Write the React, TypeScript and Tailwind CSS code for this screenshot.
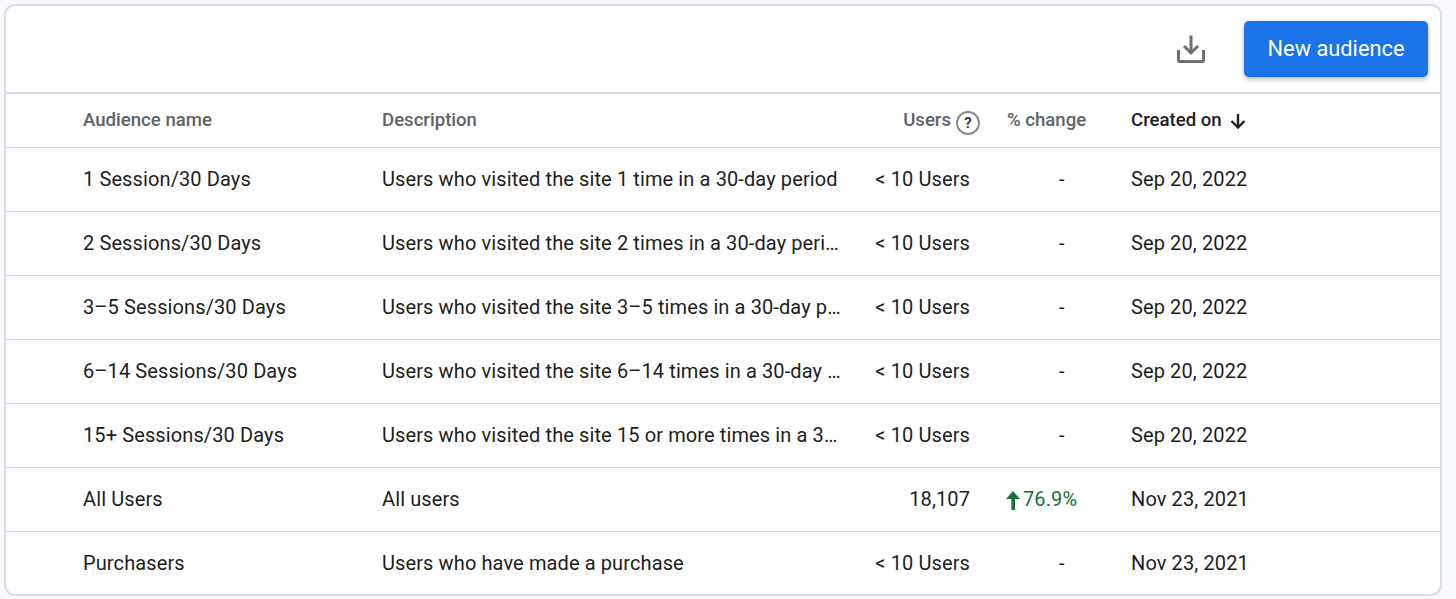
import React from 'react'

type Row = {
  name: string;
  description: string;
  users: string;
  change: string;
  created: string;
}

const rows: Row[] = [
  { name: '1 Session/30 Days', description: 'Users who visited the site 1 time in a 30-day period', users: '< 10 Users', change: '-', created: 'Sep 20, 2022' },
  { name: '2 Sessions/30 Days', description: 'Users who visited the site 2 times in a 30-day period', users: '< 10 Users', change: '-', created: 'Sep 20, 2022' },
  { name: '3–5 Sessions/30 Days', description: 'Users who visited the site 3–5 times in a 30-day period', users: '< 10 Users', change: '-', created: 'Sep 20, 2022' },
  { name: '6–14 Sessions/30 Days', description: 'Users who visited the site 6–14 times in a 30-day period', users: '< 10 Users', change: '-', created: 'Sep 20, 2022' },
  { name: '15+ Sessions/30 Days', description: 'Users who visited the site 15 or more times in a 30-day period', users: '< 10 Users', change: '-', created: 'Sep 20, 2022' },
  { name: 'All Users', description: 'All users', users: '18,107', change: '76.9%', created: 'Nov 23, 2021' },
  { name: 'Purchasers', description: 'Users who have made a purchase', users: '< 10 Users', change: '-', created: 'Nov 23, 2021' },
]

const cols = 'grid grid-cols-[299px_459px_129px_161px_1fr] pl-[77px]'

const DownloadIcon = () => (
  <svg width="32" height="32" viewBox="0 0 32 32" fill="none" stroke="#6f7073" strokeWidth="3">
    <path d="M16 2.5V19.5" />
    <path d="M9 13L16 20L23 13" />
    <path d="M3.5 17V27.5C3.5 28.2 4 28.5 4.5 28.5H27.5C28 28.5 28.5 28.2 28.5 27.5V17" />
  </svg>
)

const HelpIcon = () => (
  <span className="-mr-[10px] ml-[5px] mt-[4px] flex h-[24px] w-[24px] items-center justify-center rounded-full border-2 border-[#8a8c8f] text-[15px] font-bold leading-none text-[#3c4043]">
    ?
  </span>
)

const ArrowDown = () => (
  <svg width="16" height="16" viewBox="0 0 16 16" fill="none" stroke="#202124" strokeWidth="2.4" className="ml-[8px]">
    <path d="M8 1V14.5" />
    <path d="M1.5 8L8 14.5L14.5 8" />
  </svg>
)

const ArrowUp = () => (
  <svg width="14" height="20" viewBox="0 0 14 20" fill="#137333" className="mr-[3px] mt-[2px]">
    <path d="M7 1L14 9H9V20H5.4V9H0L7 1Z" />
  </svg>
)

const App = () => (
  <div className="h-[599px] w-[1456px] overflow-hidden bg-[#f8f9fc] pl-[4px] pt-[4px] font-['Roboto',sans-serif]">
    <div className="h-[592px] w-[1438px] overflow-hidden rounded-[11px] border-2 border-[#dadce6] bg-white">
      <div className="flex h-[88px] items-start justify-end border-b-2 border-[#dcdde2] pr-[12px] pt-[15px]">
        <div className="mr-[37px] mt-[12px]"><DownloadIcon /></div>
        <button className="h-[56px] w-[184px] rounded-[5px] bg-[#1a73e8] text-[21.8px] text-white shadow-[0_2px_5px_rgba(60,64,67,0.4)]">
          New audience
        </button>
      </div>
      <div className={`${cols} h-[54px] items-center border-b border-[#d5d7e0] pt-[1px] text-[18.6px] font-medium text-[#5f6368]`}>
        <div>Audience name</div>
        <div>Description</div>
        <div className="flex items-center justify-end">Users<HelpIcon /></div>
        <div className="pl-[37px]">% change</div>
        <div className="flex items-center text-[#202124]">Created on<ArrowDown /></div>
      </div>
      {rows.map((row) => (
        <div key={row.name} className={`${cols} h-[64px] items-center border-b border-[#d5d7e0] pb-[2px] text-[20px] tracking-[0.11px] text-[#1d1e20] last:border-b-0`}>
          <div>{row.name}</div>
          <div className="truncate">{row.description}</div>
          <div className="text-right">{row.users}</div>
          {row.change === '-' ? (
            <div className="pl-[89px]">-</div>
          ) : (
            <div className="flex items-center pl-[36px] text-[#137333]"><ArrowUp />{row.change}</div>
          )}
          <div>{row.created}</div>
        </div>
      ))}
    </div>
  </div>
)

export default App
